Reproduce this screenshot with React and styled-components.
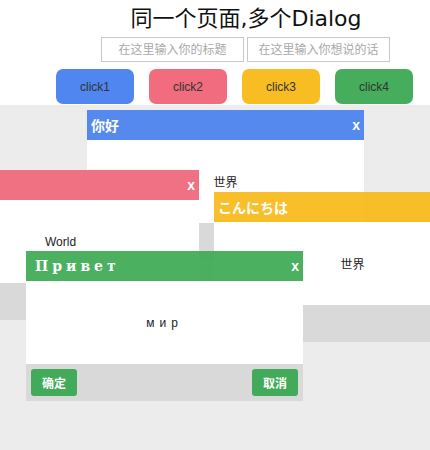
import React from "react";
import styled, { createGlobalStyle } from "styled-components";

const Global = createGlobalStyle`
  html, body { margin: 0; padding: 0; overflow: hidden; background: #ffffff; }
  #root { min-height: 100vh; display: flex; flex-direction: column; }
  * { box-sizing: border-box; }
`;

const Top = styled.header`
  background: #fff;
  padding-bottom: 1px;
`;

const Title = styled.h1`
  margin: 0;
  padding-left: 62px;
  height: 37px;
  line-height: 38px;
  text-align: center;
  font-family: "DejaVu Sans", "Noto Sans CJK SC", sans-serif;
  font-weight: normal;
  font-size: 22px;
  color: #111;
`;

const InputRow = styled.div`
  display: flex;
  justify-content: center;
  gap: 3px;
  padding-left: 61px;
`;

const TextInput = styled.input`
  width: 143px;
  height: 25px;
  border: 1px solid #c9c9c9;
  padding: 0;
  margin: 0;
  text-align: center;
  font-family: "Liberation Sans", "Noto Sans CJK SC", sans-serif;
  font-size: 12px;
  outline: none;
  &::placeholder { color: #a9a9a9; }
`;

const ButtonRow = styled.div`
  display: flex;
  gap: 15px;
  padding-left: 56px;
  margin-top: 7px;
`;

const OpenButton = styled.button`
  width: 78px;
  height: 35px;
  border: none;
  border-radius: 7px;
  background: ${(p) => p.$color};
  color: #333;
  font-family: "Liberation Sans", sans-serif;
  font-size: 12px;
  padding: 0;
`;

const Stage = styled.main`
  position: relative;
  flex: 1;
  background: #ececec;
  overflow: hidden;
`;

const DialogBox = styled.section`
  position: absolute;
  width: 277px;
  display: flex;
  flex-direction: column;
`;

const DialogHeader = styled.div`
  height: 30px;
  display: flex;
  align-items: center;
  justify-content: space-between;
  padding: 0 4px 0 4px;
  background: ${(p) => p.$color};
  opacity: 0.96;
  color: #fff;
`;

const DialogTitle = styled.span`
  font-family: "Liberation Sans", "Noto Sans CJK ${(p) => p.$cjk || "SC"}", sans-serif;
  font-weight: bold;
  font-size: 14px;
  ${(p) =>
    p.$spaced &&
    `
    font-family: "DejaVu Serif", serif;
    font-size: 14px;
    letter-spacing: 4px;
    margin-left: 5px;
  `}
`;

const CloseMark = styled.span`
  font-family: "Liberation Sans", sans-serif;
  font-weight: bold;
  font-size: 14px;
  line-height: 1;
  margin-top: -1px;
`;

const DialogBody = styled.div`
  height: 83px;
  background: #fff;
  display: flex;
  align-items: center;
  justify-content: center;
  font-family: "Liberation Sans", "Noto Sans CJK SC", sans-serif;
  font-size: 12px;
  color: #222;
  ${(p) => p.$spaced && `letter-spacing: 5px; padding-top: 1px;`}
`;

const DialogFooter = styled.div`
  height: 37px;
  background: #d9d9d9;
  display: flex;
  align-items: center;
  justify-content: space-between;
  padding: 0 5px;
`;

const FooterButton = styled.button`
  height: 27px;
  padding: 0 11px;
  border: none;
  border-radius: 3px;
  background: #42ab5a;
  color: #fff;
  font-family: "Noto Sans CJK SC", sans-serif;
  font-weight: bold;
  font-size: 12px;
`;

const dialogs = [
  { title: "你好", body: "世界", color: "#4f86ef", left: 87, top: 5 },
  { title: "", body: "World", color: "#f06c7e", left: -78, top: 65 },
  { title: "こんにちは", body: "世界", color: "#f8bd22", left: 214, top: 87, cjk: "JP" },
  { title: "Привет", body: "мир", color: "#45ad5b", left: 26, top: 146, spaced: true },
];

function Dialog({ d }) {
  return (
    <DialogBox style={{ left: d.left, top: d.top }}>
      <DialogHeader $color={d.color}>
        <DialogTitle $cjk={d.cjk} $spaced={d.spaced}>{d.title}</DialogTitle>
        <CloseMark>x</CloseMark>
      </DialogHeader>
      <DialogBody $spaced={d.spaced}>{d.body}</DialogBody>
      <DialogFooter>
        <FooterButton>确定</FooterButton>
        <FooterButton>取消</FooterButton>
      </DialogFooter>
    </DialogBox>
  );
}

export default function App() {
  const btns = [
    ["click1", "#4f86ef"],
    ["click2", "#f06c7e"],
    ["click3", "#f8bd22"],
    ["click4", "#45ad5b"],
  ];
  return (
    <>
      <Global />
      <Top>
        <Title>同一个页面,多个Dialog</Title>
        <InputRow>
          <TextInput placeholder="在这里输入你的标题" />
          <TextInput placeholder="在这里输入你想说的话" />
        </InputRow>
        <ButtonRow>
          {btns.map(([t, c]) => (
            <OpenButton key={t} $color={c}>{t}</OpenButton>
          ))}
        </ButtonRow>
      </Top>
      <Stage>
        {dialogs.map((d, i) => (
          <Dialog key={i} d={d} />
        ))}
      </Stage>
    </>
  );
}
